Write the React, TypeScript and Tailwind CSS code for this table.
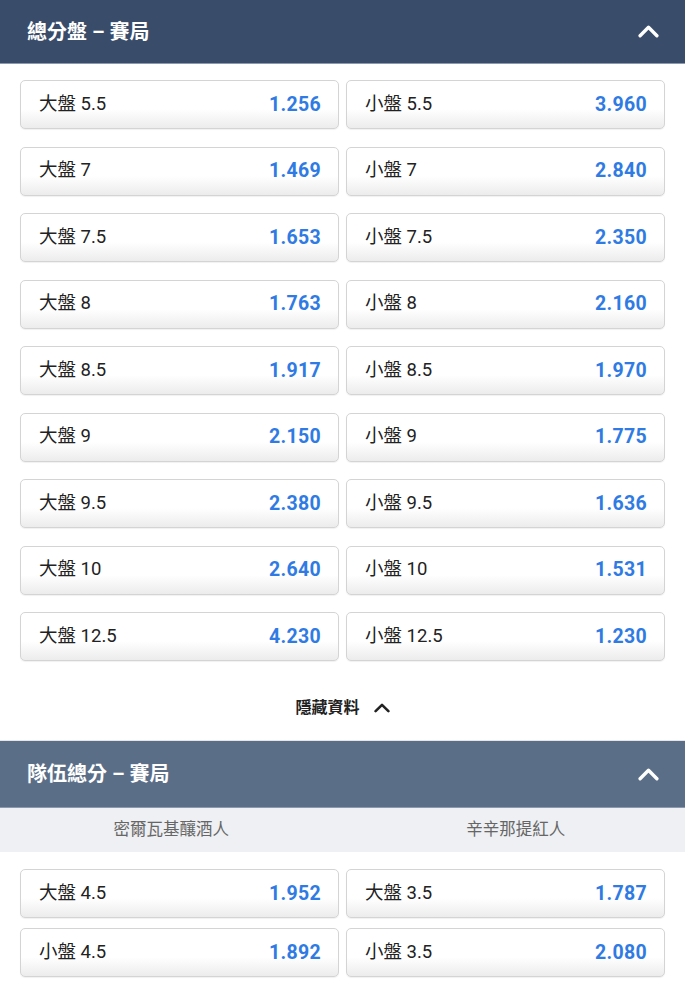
const font = { fontFamily: 'Roboto, "Noto Sans CJK TC", sans-serif' };

const totals = [
  ["5.5", "1.256", "3.960"],
  ["7", "1.469", "2.840"],
  ["7.5", "1.653", "2.350"],
  ["8", "1.763", "2.160"],
  ["8.5", "1.917", "1.970"],
  ["9", "2.150", "1.775"],
  ["9.5", "2.380", "1.636"],
  ["10", "2.640", "1.531"],
  ["12.5", "4.230", "1.230"],
];

function Chevron({ className }: { className: string }) {
  return (
    <svg viewBox="0 0 20 12" className={className} fill="none">
      <path d="M2 10 L10 2 L18 10" stroke="currentColor" strokeWidth="3.2" strokeLinecap="round" strokeLinejoin="round" />
    </svg>
  );
}

function OddButton({ label, odd }: { label: string; odd: string }) {
  return (
    <div className="h-[49px] flex items-center justify-between pl-[18px] pr-[17px] rounded-[5px] border border-[#d4d4d4] bg-gradient-to-b from-white from-60% to-[#ececec] shadow-[0_1px_1px_rgba(0,0,0,0.06)]">
      <span className="text-[18.5px] text-[#222]">{label}</span>
      <span className="text-[19.5px] font-bold text-[#2f7be3] tracking-[0.3px]">{odd}</span>
    </div>
  );
}

function SectionHeader({ title, bg }: { title: string; bg: string }) {
  return (
    <div className={`h-[67px] flex items-center justify-between pl-[27px] pr-[26px] border-b border-[#8a99ad] ${bg}`}>
      <span className="text-[20px] font-bold text-white">{title}</span>
      <Chevron className="w-[21px] h-[13px] text-white" />
    </div>
  );
}

export default function App() {
  return (
    <div className="w-[685px] bg-white" style={font}>
      <div className="h-[64px] flex items-center justify-between pl-[27px] pr-[26px] bg-[#394c69] border-b border-[#8a99ad]">
        <span className="text-[20px] font-bold text-white">總分盤 – 賽局</span>
        <Chevron className="w-[21px] h-[13px] text-white" />
      </div>
      <div className="px-[20px] pt-[16px] grid grid-cols-2 gap-x-[7px] gap-y-[17.5px]">
        {totals.map(([line, over, under]) => (
          <>
            <OddButton key={"o" + line} label={`大盤 ${line}`} odd={over} />
            <OddButton key={"u" + line} label={`小盤 ${line}`} odd={under} />
          </>
        ))}
      </div>
      <div className="h-[80px] pt-[14px] flex items-center justify-center gap-[14px] border-b border-[#e4e6ea]">
        <span className="text-[16px] font-bold text-[#222]">隱藏資料</span>
        <Chevron className="w-[16px] h-[10px] text-[#222]" />
      </div>
      <SectionHeader title="隊伍總分 – 賽局" bg="bg-[#5b6e88]" />
      <div className="h-[44px] grid grid-cols-2 bg-[#eef0f3] text-[16.5px] text-[#666]">
        <div className="flex items-center justify-center">密爾瓦基釀酒人</div>
        <div className="flex items-center justify-center pl-[4px]">辛辛那提紅人</div>
      </div>
      <div className="px-[20px] pt-[17px] pb-[24px] grid grid-cols-2 gap-x-[7px] gap-y-[10px]">
        <OddButton label="大盤 4.5" odd="1.952" />
        <OddButton label="大盤 3.5" odd="1.787" />
        <OddButton label="小盤 4.5" odd="1.892" />
        <OddButton label="小盤 3.5" odd="2.080" />
      </div>
    </div>
  );
}
